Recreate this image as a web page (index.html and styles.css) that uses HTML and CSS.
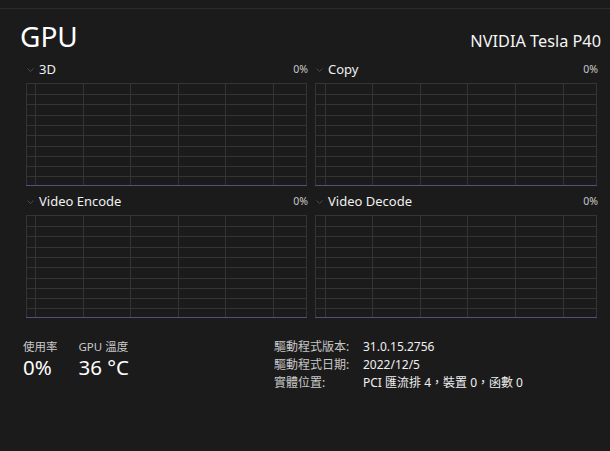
FILE: index.html
```html
<!DOCTYPE html>
<html>
<head>
<meta charset="utf-8">
<link rel="stylesheet" href="styles.css">
</head>
<body>
<div class="topbar"></div>
<div class="header">
  <div class="title">GPU</div>
  <div class="model">NVIDIA Tesla P40</div>
</div>
<div class="graphs">
  <div class="cell">
    <div class="cell-head">
      <svg class="chev" width="7" height="5" viewBox="0 0 7 5"><polyline points="0.5,0.5 3.5,3.5 6.5,0.5" fill="none" stroke="#4a4a4a" stroke-width="1"/></svg>
      <span class="label">3D</span>
      <span class="pct">0%</span>
    </div>
    <svg class="grid" width="281" height="103" viewBox="0 0 281 103" shape-rendering="crispEdges">
      <g stroke="#343434" stroke-width="1">
        <line x1="0" y1="11.5" x2="280" y2="11.5"/><line x1="0" y1="21.5" x2="280" y2="21.5"/><line x1="0" y1="32.5" x2="280" y2="32.5"/><line x1="0" y1="42.5" x2="280" y2="42.5"/><line x1="0" y1="52.5" x2="280" y2="52.5"/><line x1="0" y1="63.5" x2="280" y2="63.5"/><line x1="0" y1="73.5" x2="280" y2="73.5"/><line x1="0" y1="83.5" x2="280" y2="83.5"/><line x1="0" y1="93.5" x2="280" y2="93.5"/>
        <line x1="9.5" y1="0" x2="9.5" y2="102"/><line x1="57.5" y1="0" x2="57.5" y2="102"/><line x1="104.5" y1="0" x2="104.5" y2="102"/><line x1="152.5" y1="0" x2="152.5" y2="102"/><line x1="199.5" y1="0" x2="199.5" y2="102"/><line x1="247.5" y1="0" x2="247.5" y2="102"/>
        <rect x="0.5" y="0.5" width="280" height="102" fill="none"/>
      </g>
      <line x1="0" y1="102.5" x2="281" y2="102.5" stroke="#5a4d7c" stroke-width="1"/>
    </svg>
  </div>
  <div class="cell">
    <div class="cell-head">
      <svg class="chev" width="7" height="5" viewBox="0 0 7 5"><polyline points="0.5,0.5 3.5,3.5 6.5,0.5" fill="none" stroke="#4a4a4a" stroke-width="1"/></svg>
      <span class="label">Copy</span>
      <span class="pct">0%</span>
    </div>
    <svg class="grid" width="282" height="103" viewBox="0 0 282 103" shape-rendering="crispEdges">
      <g stroke="#343434" stroke-width="1">
        <line x1="0" y1="11.5" x2="281" y2="11.5"/><line x1="0" y1="21.5" x2="281" y2="21.5"/><line x1="0" y1="32.5" x2="281" y2="32.5"/><line x1="0" y1="42.5" x2="281" y2="42.5"/><line x1="0" y1="52.5" x2="281" y2="52.5"/><line x1="0" y1="63.5" x2="281" y2="63.5"/><line x1="0" y1="73.5" x2="281" y2="73.5"/><line x1="0" y1="83.5" x2="281" y2="83.5"/><line x1="0" y1="93.5" x2="281" y2="93.5"/>
        <line x1="10.5" y1="0" x2="10.5" y2="102"/><line x1="57.5" y1="0" x2="57.5" y2="102"/><line x1="105.5" y1="0" x2="105.5" y2="102"/><line x1="152.5" y1="0" x2="152.5" y2="102"/><line x1="200.5" y1="0" x2="200.5" y2="102"/><line x1="248.5" y1="0" x2="248.5" y2="102"/>
        <rect x="0.5" y="0.5" width="281" height="102" fill="none"/>
      </g>
      <line x1="0" y1="102.5" x2="282" y2="102.5" stroke="#5a4d7c" stroke-width="1"/>
    </svg>
  </div>
  <div class="cell">
    <div class="cell-head">
      <svg class="chev" width="7" height="5" viewBox="0 0 7 5"><polyline points="0.5,0.5 3.5,3.5 6.5,0.5" fill="none" stroke="#4a4a4a" stroke-width="1"/></svg>
      <span class="label">Video Encode</span>
      <span class="pct">0%</span>
    </div>
    <svg class="grid" width="281" height="103" viewBox="0 0 281 103" shape-rendering="crispEdges">
      <g stroke="#343434" stroke-width="1">
        <line x1="0" y1="11.5" x2="280" y2="11.5"/><line x1="0" y1="21.5" x2="280" y2="21.5"/><line x1="0" y1="32.5" x2="280" y2="32.5"/><line x1="0" y1="42.5" x2="280" y2="42.5"/><line x1="0" y1="52.5" x2="280" y2="52.5"/><line x1="0" y1="63.5" x2="280" y2="63.5"/><line x1="0" y1="73.5" x2="280" y2="73.5"/><line x1="0" y1="83.5" x2="280" y2="83.5"/><line x1="0" y1="93.5" x2="280" y2="93.5"/>
        <line x1="9.5" y1="0" x2="9.5" y2="102"/><line x1="57.5" y1="0" x2="57.5" y2="102"/><line x1="104.5" y1="0" x2="104.5" y2="102"/><line x1="152.5" y1="0" x2="152.5" y2="102"/><line x1="199.5" y1="0" x2="199.5" y2="102"/><line x1="247.5" y1="0" x2="247.5" y2="102"/>
        <rect x="0.5" y="0.5" width="280" height="102" fill="none"/>
      </g>
      <line x1="0" y1="102.5" x2="281" y2="102.5" stroke="#5a4d7c" stroke-width="1"/>
    </svg>
  </div>
  <div class="cell">
    <div class="cell-head">
      <svg class="chev" width="7" height="5" viewBox="0 0 7 5"><polyline points="0.5,0.5 3.5,3.5 6.5,0.5" fill="none" stroke="#4a4a4a" stroke-width="1"/></svg>
      <span class="label">Video Decode</span>
      <span class="pct">0%</span>
    </div>
    <svg class="grid" width="282" height="103" viewBox="0 0 282 103" shape-rendering="crispEdges">
      <g stroke="#343434" stroke-width="1">
        <line x1="0" y1="11.5" x2="281" y2="11.5"/><line x1="0" y1="21.5" x2="281" y2="21.5"/><line x1="0" y1="32.5" x2="281" y2="32.5"/><line x1="0" y1="42.5" x2="281" y2="42.5"/><line x1="0" y1="52.5" x2="281" y2="52.5"/><line x1="0" y1="63.5" x2="281" y2="63.5"/><line x1="0" y1="73.5" x2="281" y2="73.5"/><line x1="0" y1="83.5" x2="281" y2="83.5"/><line x1="0" y1="93.5" x2="281" y2="93.5"/>
        <line x1="10.5" y1="0" x2="10.5" y2="102"/><line x1="57.5" y1="0" x2="57.5" y2="102"/><line x1="105.5" y1="0" x2="105.5" y2="102"/><line x1="152.5" y1="0" x2="152.5" y2="102"/><line x1="200.5" y1="0" x2="200.5" y2="102"/><line x1="248.5" y1="0" x2="248.5" y2="102"/>
        <rect x="0.5" y="0.5" width="281" height="102" fill="none"/>
      </g>
      <line x1="0" y1="102.5" x2="282" y2="102.5" stroke="#5a4d7c" stroke-width="1"/>
    </svg>
  </div>
</div>
<div class="bottom">
  <div class="stats">
    <div class="stat">
      <div class="stat-label">使用率</div>
      <div class="stat-value">0%</div>
    </div>
    <div class="stat">
      <div class="stat-label">GPU 溫度</div>
      <div class="stat-value">36 °C</div>
    </div>
  </div>
  <div class="info">
    <div class="info-k">驅動程式版本:</div><div class="info-v">31.0.15.2756</div>
    <div class="info-k">驅動程式日期:</div><div class="info-v">2022/12/5</div>
    <div class="info-k">實體位置:</div><div class="info-v">PCI 匯流排 4，裝置 0，函數 0</div>
  </div>
</div>
</body>
</html>
```
FILE: styles.css
```css
html, body {
  margin: 0;
  padding: 0;
  background: #1b1b1b;
  color: #f2f2f2;
  font-family: "Noto Sans", "Noto Sans CJK TC", sans-serif;
  width: 610px;
  height: 451px;
  overflow: hidden;
}
.topbar {
  height: 8px;
  border-bottom: 1px solid #2c2c2c;
}
.header {
  display: flex;
  justify-content: space-between;
  align-items: flex-end;
  padding: 0 9px 0 20px;
  height: 45px;
}
.title {
  font-size: 28px;
  line-height: 32px;
  font-weight: 400;
  color: #ffffff;
  margin-bottom: 2px;
}
.model {
  font-size: 16.3px;
  line-height: 20px;
  margin-bottom: 3px;
  color: #f5f5f5;
}
.graphs {
  display: grid;
  grid-template-columns: 281px 282px;
  column-gap: 8px;
  padding-left: 26px;
}
.cell {
  display: flex;
  flex-direction: column;
}
.cell-head {
  display: flex;
  align-items: center;
  height: 29px;
  padding-left: 1px;
  box-sizing: border-box;
  padding-top: 1px;
}
.chev {
  margin-right: 5px;
  margin-top: 3px;
}
.label {
  font-size: 13px;
  color: #f0f0f0;
  flex: 1;
}
.pct {
  font-size: 10.5px;
  color: #c9c9c9;
  margin-right: -1px;
}
.grid {
  display: block;
}
.bottom {
  display: flex;
  padding-left: 23px;
  margin-top: 21px;
}
.stats {
  display: flex;
  gap: 21px;
  width: 251px;
}
.stat-label {
  font-size: 11.5px;
  line-height: 16px;
  color: #c8c8c8;
}
.stat-value {
  font-size: 20.5px;
  line-height: 24px;
  color: #ffffff;
}
.info {
  display: grid;
  grid-template-columns: 89px auto;
  font-size: 12px;
  line-height: 18px;
  margin-top: -1px;
}
.info-k {
  color: #c8c8c8;
}
.info-v {
  color: #f0f0f0;
}
```
